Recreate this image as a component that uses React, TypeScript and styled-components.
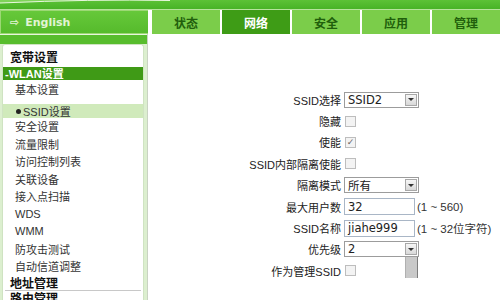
import React from "react";
import styled, { createGlobalStyle } from "styled-components";

const Global = createGlobalStyle`
  html, body { margin: 0; padding: 0; background: #fff; }
  body { width: 500px; height: 300px; overflow: hidden; font-family: "Noto Sans CJK SC", "Noto Sans", sans-serif; }
`;

const Page = styled.div`
  width: 500px;
  height: 300px;
  display: flex;
  flex-direction: column;
  overflow: hidden;
  background: #fff;
`;

const TopBand = styled.div`
  position: relative;
  flex-shrink: 0;
  height: 9px;
  background: linear-gradient(#5cc236, #48b326);
  border-bottom: 1px solid #b7e39c;
`;

const Curve = styled.svg`
  position: absolute;
  left: 0;
  top: 0;
`;

const Header = styled.div`
  display: flex;
  flex-shrink: 0;
  height: 24px;
  background: #fff;
`;

const EnglishCell = styled.div`
  width: 148px;
  box-sizing: border-box;
  display: flex;
  align-items: center;
  gap: 6px;
  padding-left: 9px;
  background: linear-gradient(#66c83a, #56bb2c);
  border: 1px solid #9cd874;
  border-right: none;
  color: #e2f4d4;
  font-family: "DejaVu Sans", sans-serif;
  font-weight: bold;
  font-size: 11px;
`;

const Tabs = styled.div`
  flex: 1;
  display: flex;
  gap: 2px;
  padding-left: 4px;
  background: #fff;
`;

const Tab = styled.div<{ $active?: boolean }>`
  flex: 1;
  display: flex;
  align-items: center;
  justify-content: center;
  background: ${(p) => (p.$active ? "#3e9c16" : "#7bcd4a")};
  color: ${(p) => (p.$active ? "#ffffff" : "#215f0c")};
  font-size: 12px;
  font-weight: bold;
`;

const Body = styled.div`
  flex: 1;
  display: flex;
  min-height: 0;
`;

const Sidebar = styled.div`
  width: 148px;
  box-sizing: border-box;
  display: flex;
  flex-direction: column;
  background: #dcefcf;
  border-right: 1px solid #c9d3c2;
  padding: 0 3px 0 2px;
`;

const SideHead = styled.div`
  flex-shrink: 0;
  height: 9px;
  margin: 0 -3px 0 -2px;
  background: #58bd2d;
  border-top: 1px solid #e8f5dd;
`;

const SideBox = styled.div`
  flex: 1;
  background: #fff;
  border: 1px solid #cfe3c2;
  border-bottom: none;
  border-radius: 3px 3px 0 0;
  padding-top: 3px;
  display: flex;
  flex-direction: column;
`;

type Kind = "top" | "open" | "sub" | "current";

const Item = styled.div<{ $kind: Kind; $h?: number; $mt?: number }>`
  height: ${(p) => p.$h ?? 17.5}px;
  margin-top: ${(p) => p.$mt ?? 0}px;
  flex-shrink: 0;
  display: flex;
  align-items: center;
  white-space: nowrap;
  font-size: ${(p) => (p.$kind === "top" ? 12 : 11)}px;
  padding-left: ${(p) => (p.$kind === "top" ? 7 : p.$kind === "open" ? 2 : 12)}px;
  font-weight: ${(p) => (p.$kind === "top" || p.$kind === "open" ? "bold" : "normal")};
  color: ${(p) => (p.$kind === "open" ? "#ffffff" : p.$kind === "top" ? "#111" : "#333")};
  background: ${(p) =>
    p.$kind === "open" ? "#3f9a16" : p.$kind === "current" ? "#d0eabb" : "transparent"};
  font-family: "Liberation Sans", "Noto Sans CJK SC", sans-serif;
`;

const Bullet = styled.span`
  display: inline-block;
  width: 5px;
  height: 5px;
  border-radius: 50%;
  background: #222;
  margin: 2px 2px 0 1px;
`;

const Divider = styled.div`
  height: 1px;
  flex-shrink: 0;
  margin: 0 2px;
  background: #c8c8c8;
`;

const Content = styled.div`
  flex: 1;
  padding-top: 55px;
`;

const Form = styled.div`
  display: grid;
  grid-template-columns: 193px auto;
  column-gap: 3px;
  grid-auto-rows: 21.4px;
  align-items: center;
`;

const Label = styled.div`
  text-align: right;
  font-size: 11px;
  color: #222;
  white-space: nowrap;
  font-family: "Liberation Sans", "Noto Sans CJK SC", sans-serif;
`;

const Field = styled.div`
  display: flex;
  align-items: center;
  position: relative;
`;

const SelectBox = styled.div`
  width: 75px;
  height: 16px;
  box-sizing: border-box;
  border: 1px solid #9c9c9c;
  background: #fff;
  display: flex;
  align-items: center;
  justify-content: space-between;
  font-size: 11.5px;
  color: #222;
  padding-left: 3px;
  font-family: "DejaVu Sans", "Noto Sans CJK SC", sans-serif;
`;

const Arrow = styled.div`
  width: 12px;
  height: 12px;
  margin-right: 1px;
  box-sizing: border-box;
  border: 1px solid #a8a8a8;
  background: linear-gradient(#f6f6f6, #d8d8d8);
  display: flex;
  align-items: center;
  justify-content: center;
  &::after {
    content: "";
    border-left: 3px solid transparent;
    border-right: 3px solid transparent;
    border-top: 3px solid #333;
  }
`;

const DropList = styled.div`
  position: absolute;
  left: 0;
  top: 16px;
  width: 75px;
  height: 21px;
  display: flex;
  justify-content: flex-end;
  background: #fff;
`;

const ScrollTrack = styled.div`
  width: 13px;
  margin-right: 1px;
  box-sizing: border-box;
  background: #c9c9c9;
  border-left: 1px solid #b0b0b0;
  border-right: 1px solid #7d7d7d;
`;

const Check = styled.div`
  width: 11px;
  height: 11px;
  margin-left: 1px;
  box-sizing: border-box;
  border: 1px solid #bdbdbd;
  background: #f3f3f3;
  display: flex;
  align-items: center;
  justify-content: center;
  font-size: 9px;
  line-height: 1;
  color: #666;
  font-family: "DejaVu Sans", sans-serif;
`;

const TextInput = styled.div`
  width: 71px;
  height: 17px;
  box-sizing: border-box;
  border: 1px solid #a9b6c6;
  background: #fff;
  display: flex;
  align-items: center;
  padding-left: 3px;
  font-size: 11.5px;
  color: #222;
  font-family: "DejaVu Sans", sans-serif;
`;

const Hint = styled.span`
  font-size: 11.5px;
  color: #333;
  white-space: nowrap;
  margin-left: 2px;
  font-family: "Liberation Sans", "Noto Sans CJK SC", sans-serif;
`;

const tabs = ["状态", "网络", "安全", "应用", "管理"];

const Select = ({ value, open }: { value: string; open?: boolean }) => (
  <Field>
    <SelectBox>
      {value}
      <Arrow />
    </SelectBox>
    {open && (
      <DropList>
        <ScrollTrack />
      </DropList>
    )}
  </Field>
);

const subs = ["安全设置", "流量限制", "访问控制列表", "关联设备", "接入点扫描", "WDS", "WMM", "防攻击测试", "自动信道调整"];

export default function App() {
  return (
    <Page>
      <Global />
      <TopBand>
        <Curve width="500" height="9" viewBox="0 0 500 9">
          <path d="M0 0 L170 0 Q 90 -1 0 3 Z" fill="#7fd35a" />
          <path d="M0 3 Q 90 -1 170 0.5" stroke="#e9f7e0" strokeWidth="1" fill="none" />
        </Curve>
      </TopBand>
      <Header>
        <EnglishCell>
          <span>⇨</span>
          <span>English</span>
        </EnglishCell>
        <Tabs>
          {tabs.map((t) => (
            <Tab key={t} $active={t === "网络"}>
              {t}
            </Tab>
          ))}
        </Tabs>
      </Header>
      <Body>
        <Sidebar>
          <SideHead />
          <SideBox>
            <Item $kind="top" $h={16}>宽带设置</Item>
            <Item $kind="open" $h={12.5} $mt={3}>-WLAN设置</Item>
            <Item $kind="sub" $h={18}>基本设置</Item>
            <Item $kind="current" $h={14} $mt={6}>
              <Bullet />
              SSID设置
            </Item>
            {subs.map((s) => (
              <Item key={s} $kind="sub">{s}</Item>
            ))}
            <Item $kind="top" $h={14.5}>地址管理</Item>
            <Divider />
            <Item $kind="top" $h={13}>路由管理</Item>
          </SideBox>
        </Sidebar>
        <Content>
          <Form>
            <Label>SSID选择</Label>
            <Select value="SSID2" />
            <Label>隐藏</Label>
            <Field><Check /></Field>
            <Label>使能</Label>
            <Field><Check>✓</Check></Field>
            <Label>SSID内部隔离使能</Label>
            <Field><Check /></Field>
            <Label>隔离模式</Label>
            <Select value="所有" />
            <Label>最大用户数</Label>
            <Field>
              <TextInput>32</TextInput>
              <Hint>(1 ~ 560)</Hint>
            </Field>
            <Label>SSID名称</Label>
            <Field>
              <TextInput>jiahe999</TextInput>
              <Hint>(1 ~ 32位字符)</Hint>
            </Field>
            <Label>优先级</Label>
            <Select value="2" open />
            <Label>作为管理SSID</Label>
            <Field><Check /></Field>
          </Form>
        </Content>
      </Body>
    </Page>
  );
}
